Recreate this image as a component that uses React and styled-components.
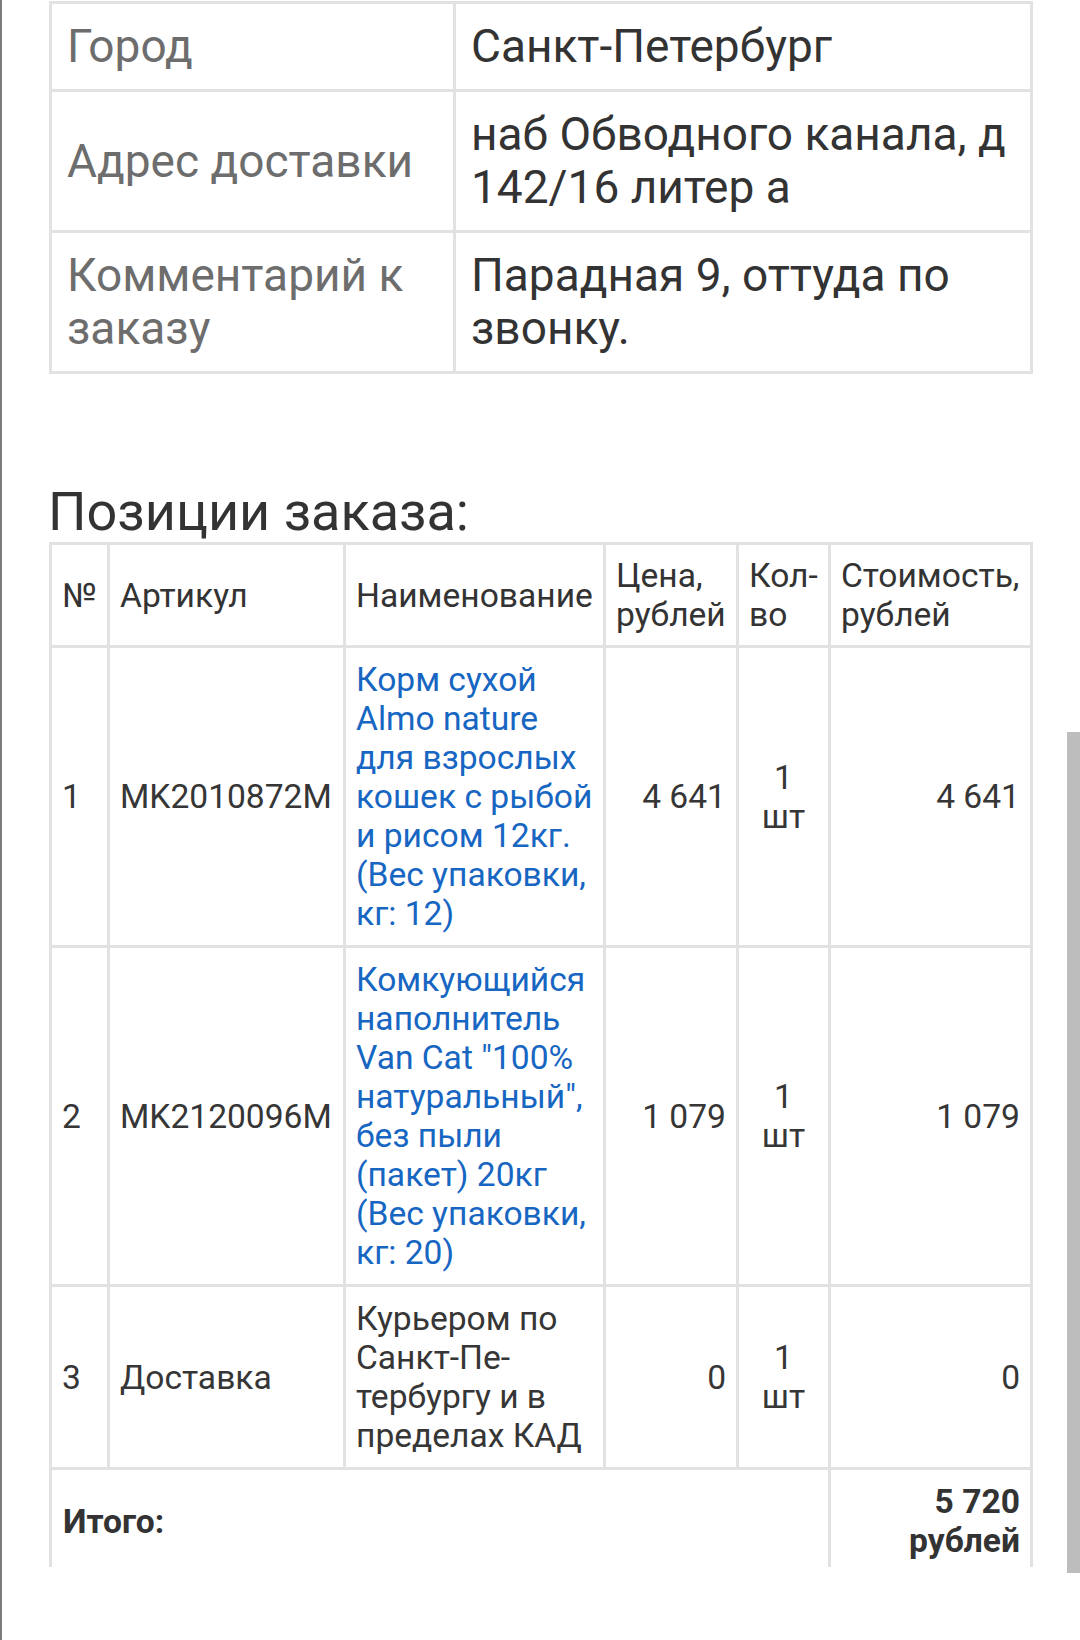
import React from 'react';
import styled, { createGlobalStyle } from 'styled-components';

const GlobalStyle = createGlobalStyle`
  html, body {
    margin: 0;
    padding: 0;
    background: #ffffff;
  }
  body {
    font-family: Roboto, "Noto Sans", "Liberation Sans", sans-serif;
    color: #333333;
  }
`;

const info = [
  { label: 'Город', value: 'Санкт-Петербург' },
  { label: 'Адрес доставки', value: 'наб Обводного канала, д 142/16 литер а' },
  { label: 'Комментарий к заказу', value: 'Парадная 9, оттуда по звонку.' },
];

const items = [
  {
    num: 1,
    sku: 'MK2010872M',
    name: 'Корм сухой Almo nature для взрослых кошек с рыбой и рисом 12кг. (Вес упаковки, кг: 12)',
    link: true,
    price: '4 641',
    qty: '1 шт',
    cost: '4 641',
  },
  {
    num: 2,
    sku: 'MK2120096M',
    name: 'Комкующийся наполнитель Van Cat "100% натуральный", без пыли (пакет) 20кг (Вес упаковки, кг: 20)',
    link: true,
    price: '1 079',
    qty: '1 шт',
    cost: '1 079',
  },
  {
    num: 3,
    sku: 'Доставка',
    name: 'Курьером по Санкт-Пе\u00ADтербургу и в пределах КАД',
    link: false,
    price: '0',
    qty: '1 шт',
    cost: '0',
  },
];

const App = () => {
  return (
    <Screen>
      <GlobalStyle />
      <Viewport>
        <InfoTable>
          <colgroup>
            <col style={{ width: 404 }} />
            <col style={{ width: 577 }} />
          </colgroup>
          <tbody>
            {info.map((row) => (
              <tr key={row.label}>
                <InfoLabel>{row.label}</InfoLabel>
                <InfoValue>{row.value}</InfoValue>
              </tr>
            ))}
          </tbody>
        </InfoTable>

        <Heading>Позиции заказа:</Heading>

        <OrderTable>
          <colgroup>
            <col style={{ width: 58 }} />
            <col style={{ width: 236 }} />
            <col style={{ width: 260 }} />
            <col style={{ width: 133 }} />
            <col style={{ width: 92 }} />
            <col style={{ width: 202 }} />
          </colgroup>
          <thead>
            <tr>
              <HeadCell>№</HeadCell>
              <HeadCell>Артикул</HeadCell>
              <HeadCell>Наименование</HeadCell>
              <HeadCell>Цена, рублей</HeadCell>
              <HeadCell>Кол-во</HeadCell>
              <HeadCell>Стоимость, рублей</HeadCell>
            </tr>
          </thead>
          <tbody>
            {items.map((item) => (
              <tr key={item.num}>
                <Cell>{item.num}</Cell>
                <Cell>{item.sku}</Cell>
                <Cell>
                  {item.link ? <ProductLink href="#">{item.name}</ProductLink> : item.name}
                </Cell>
                <Cell $align="right">{item.price}</Cell>
                <Cell $align="center">{item.qty}</Cell>
                <Cell $align="right">{item.cost}</Cell>
              </tr>
            ))}
            <tr>
              <TotalCell colSpan={5}>Итого:</TotalCell>
              <TotalCell $align="right">5 720 рублей</TotalCell>
            </tr>
          </tbody>
        </OrderTable>
      </Viewport>
      <ScrollThumb />
    </Screen>
  );
};

const Screen = styled.div`
  position: relative;
  width: 1080px;
  height: 1640px;
  box-sizing: border-box;
  border-left: 2px solid #7b7b7b;
  overflow: hidden;
  background: #ffffff;
`;

const Viewport = styled.div`
  height: 1567px;
  overflow: hidden;
  padding: 1px 0 0 47px;
  box-sizing: border-box;
`;

const InfoTable = styled.table`
  width: 981px;
  table-layout: fixed;
  border-collapse: collapse;
  border: 3px solid #e2e2e2;
  font-size: 46px;
  line-height: 53px;
`;

const InfoLabel = styled.td`
  border: 3px solid #e2e2e2;
  padding: 16px 15px;
  color: #6d6d6d;
  vertical-align: middle;
`;

const InfoValue = styled(InfoLabel)`
  color: #333333;
`;

const Heading = styled.h2`
  margin: 107px 0 0 -1px;
  font-size: 54px;
  line-height: 61px;
  font-weight: 400;
  color: #333333;
`;

const OrderTable = styled.table`
  width: 981px;
  table-layout: fixed;
  border-collapse: collapse;
  border: 3px solid #e2e2e2;
  font-size: 33.6px;
  line-height: 39px;
  color: #363636;
`;

const Cell = styled.td`
  border: 3px solid #e2e2e2;
  padding: 12px 10px;
  vertical-align: middle;
  text-align: ${(p) => p.$align || 'left'};
  hyphens: manual;
`;

const HeadCell = styled.th`
  border: 3px solid #e2e2e2;
  padding: 11px 10px;
  vertical-align: middle;
  text-align: left;
  font-weight: 400;
  color: #333333;
`;

const TotalCell = styled(Cell)`
  font-weight: 700;
  color: #333333;
  padding-left: 11px;
`;

const ProductLink = styled.a`
  color: #1766c2;
  text-decoration: none;
`;

const ScrollThumb = styled.div`
  position: absolute;
  top: 732px;
  right: 0;
  width: 13px;
  height: 841px;
  background: #bdbdbd;
`;

export default App;
